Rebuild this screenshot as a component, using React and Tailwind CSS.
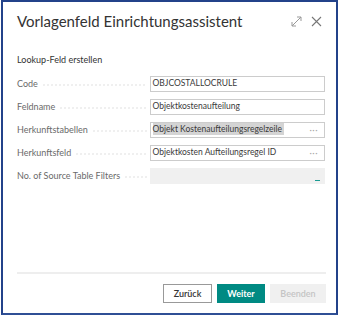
import React from "react";

const font = { fontFamily: 'Lato, "Open Sans", sans-serif' };

function Row({ label, children }) {
  return (
    <div className="flex items-center h-[16px]">
      <div className="w-[133px] flex items-center whitespace-nowrap text-[9px] text-[#6a6a6a]">
        <span className="shrink-0">{label}</span>
        <div className="flex-1 ml-[4px] mr-[3px] mt-[2px] h-[2px] bg-[radial-gradient(circle,#dddddd_0.6px,transparent_0.8px)] bg-[length:4px_2px]" />
      </div>
      <div className="w-[176px] h-[16px]">{children}</div>
    </div>
  );
}

function Box({ text, dots, highlight }) {
  return (
    <div className="h-full border border-[#cccccc] bg-white flex items-center pl-[2px] pr-[6px] text-[8.5px] text-[#3a3a3a]">
      <span className="flex-1 whitespace-nowrap">
        {highlight ? <span className="bg-[#d4d4d4] pr-[2px] py-px">{text}</span> : text}
      </span>
      {dots && <span className="text-[#aaa] text-[9px] leading-none tracking-[0.5px]">···</span>}
    </div>
  );
}

export default function App() {
  return (
    <div className="w-[340px] h-[317px] bg-white relative" style={font}>
      <div className="ml-px w-[337px] h-[315px] border-2 border-[#23428a] border-b-[#2f4f95] flex flex-col pl-[14px] pr-[11px]">
        <div className="flex items-center justify-between h-[38px] pt-px">
          <div className="text-[15px] text-[#333]">Vorlagenfeld Einrichtungsassistent</div>
          <div className="flex items-center gap-[9px] mr-[3px]">
            <svg width="11" height="11" viewBox="0 0 11 11" fill="none" stroke="#999" strokeWidth="1">
              <path d="M1 10 L10 1 M6 1 H10 V5 M1 6 V10 H5" />
            </svg>
            <svg width="11" height="11" viewBox="0 0 11 11" fill="none" stroke="#777" strokeWidth="1.1">
              <path d="M1 1 L10 10 M10 1 L1 10" />
            </svg>
          </div>
        </div>
        <div className="mt-[13px] text-[9px] text-[#333]">Lookup-Feld erstellen</div>
        <div className="mt-[9px] flex flex-col gap-[7px]">
          <Row label="Code"><Box text="OBJCOSTALLOCRULE" /></Row>
          <Row label="Feldname"><Box text="Objektkostenaufteilung" /></Row>
          <Row label="Herkunftstabellen"><Box text="Objekt Kostenaufteilungsregelzeile" dots highlight /></Row>
          <Row label="Herkunftsfeld"><Box text="Objektkosten Aufteilungsregel ID" dots /></Row>
          <Row label="No. of Source Table Filters">
            <div className="h-full bg-[#f0f0f0] relative">
              <div className="absolute right-[5px] bottom-[3px] w-[5px] h-px bg-[#1a9b93]" />
            </div>
          </Row>
        </div>
        <div className="flex-1" />
        <div className="h-[2px] bg-[#eeeeee] mr-[-1px]" />
        <div className="flex justify-end gap-[5px] mt-[10px] mb-[10px] mr-[-1px]">
          <button className="w-[49px] h-[19px] border border-[#999] bg-white text-[9px] text-[#333] font-semibold">Zurück</button>
          <button className="w-[48px] h-[19px] bg-[#008a83] text-[9px] text-white font-bold">Weiter</button>
          <button className="w-[56px] h-[19px] bg-[#f0f0f0] text-[9px] text-[#c4c4c4] font-semibold">Beenden</button>
        </div>
      </div>
    </div>
  );
}
